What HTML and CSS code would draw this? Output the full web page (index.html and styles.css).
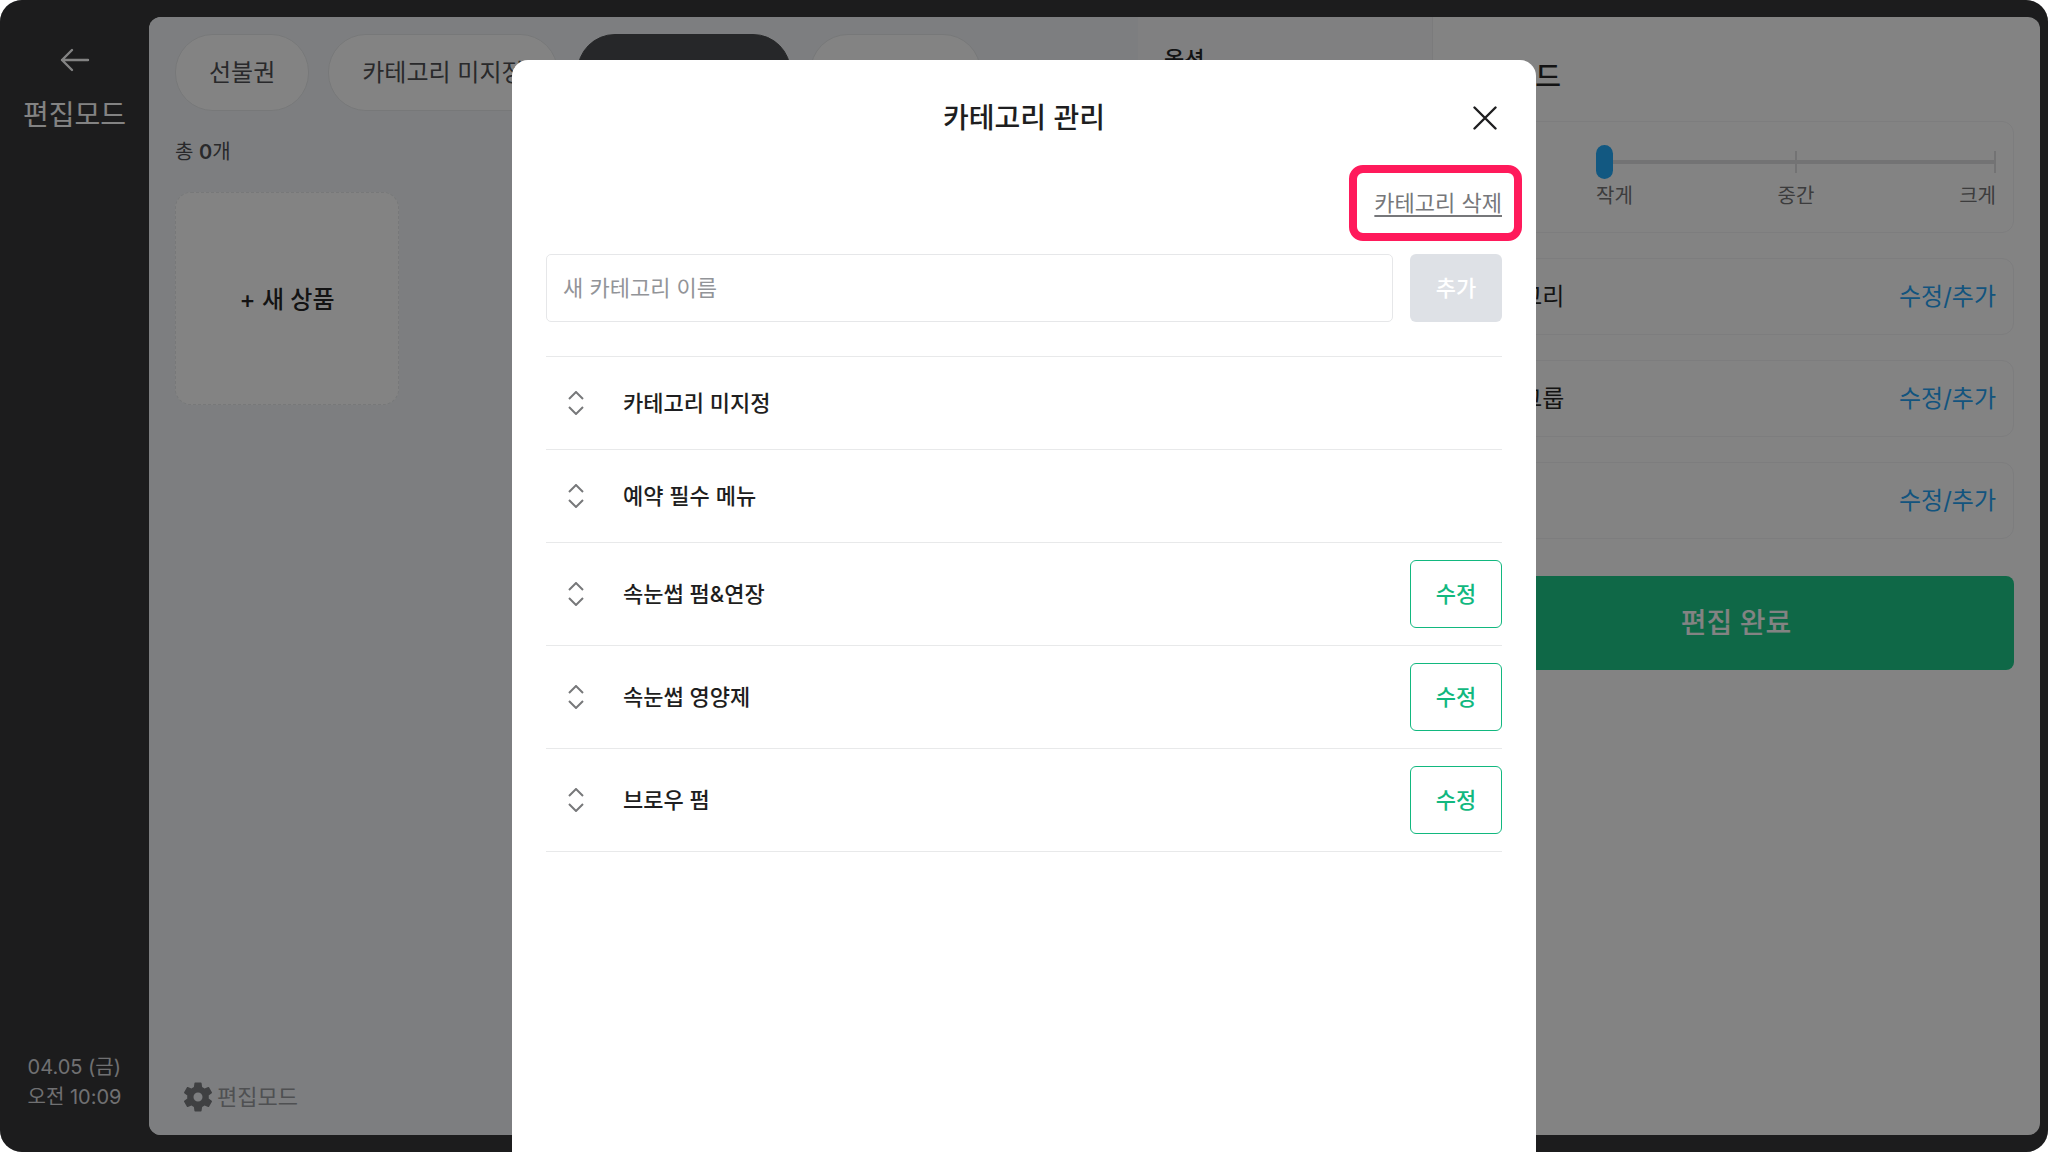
FILE: index.html
```html
<!DOCTYPE html>
<html lang="ko">
<head>
<meta charset="UTF-8">
<meta name="viewport" content="width=device-width, initial-scale=1.0">
<title>카테고리 관리</title>
<link rel="stylesheet" href="styles.css">
</head>
<body>

<div class="app">
    <aside class="sidebar">
        <button class="back" aria-label="뒤로">
            <svg width="30" height="24" viewBox="0 0 30 24" fill="none" stroke="currentColor" stroke-width="2.4" stroke-linecap="round" stroke-linejoin="round">
                <path d="M28 12H2M12 2L2 12L12 22"/>
            </svg>
        </button>
        <h1>편집모드</h1>
        <p class="clock">04.05 (금)<br>오전 10:09</p>
    </aside>

    <main class="panel">
        <section class="products">
            <nav class="tabs">
                <button class="tab">선불권</button>
                <button class="tab">카테고리 미지정</button>
                <button class="tab active">예약 필수 메뉴</button>
                <button class="tab">속눈썹&amp;펌</button>
            </nav>
            <p class="count">총 <b>0</b>개</p>
            <button class="new-product">+ 새 상품</button>
            <button class="edit-mode">
                <svg width="30" height="30" viewBox="2 2 20 20">
                    <path d="M19.14 12.94c.04-.3.06-.61.06-.94 0-.32-.02-.64-.07-.94l2.03-1.58a.49.49 0 0 0 .12-.61l-1.92-3.32a.488.488 0 0 0-.59-.22l-2.39.96c-.5-.38-1.03-.7-1.62-.94l-.36-2.54a.484.484 0 0 0-.48-.41h-3.84c-.24 0-.43.17-.47.41l-.36 2.54c-.59.24-1.13.57-1.62.94l-2.39-.96c-.22-.08-.47 0-.59.22L2.74 8.87c-.12.21-.08.47.12.61l2.03 1.58c-.05.3-.09.63-.09.94s.02.64.07.94l-2.03 1.58a.49.49 0 0 0-.12.61l1.92 3.32c.12.22.37.29.59.22l2.39-.96c.5.38 1.03.7 1.62.94l.36 2.54c.05.24.24.41.48.41h3.84c.24 0 .44-.17.47-.41l.36-2.54c.59-.24 1.13-.56 1.62-.94l2.39.96c.22.08.47 0 .59-.22l1.92-3.32c.12-.22.07-.47-.12-.61l-2.01-1.58zM12 15a3 3 0 1 1 0-6 3 3 0 0 1 0 6z"/>
                </svg>
                편집모드
            </button>
        </section>

        <section class="options">
            <h2>옵션</h2>
        </section>

        <section class="settings">
            <h2>편집모드</h2>
            <div class="setting setting-size">
                <label for="size">크기</label>
                <div class="slider">
                    <input type="range" id="size" min="0" max="2" step="1" value="0">
                    <div class="slider-labels"><span>작게</span><span>중간</span><span>크게</span></div>
                </div>
            </div>
            <div class="setting"><span>카테고리</span><a href="#category">수정/추가</a></div>
            <div class="setting"><span>옵션그룹</span><a href="#option">수정/추가</a></div>
            <div class="setting"><span>할인</span><a href="#discount">수정/추가</a></div>
            <button class="done">편집 완료</button>
        </section>
    </main>

    <div class="overlay">
        <div class="modal" role="dialog" aria-labelledby="modal-title">
            <header class="modal-header">
                <h2 id="modal-title">카테고리 관리</h2>
                <button class="close" aria-label="닫기">
                    <svg width="24" height="24" viewBox="0 0 24 24" fill="none" stroke="currentColor" stroke-width="2.4" stroke-linecap="round">
                        <path d="M1.5 1.5L22.5 22.5M22.5 1.5L1.5 22.5"/>
                    </svg>
                </button>
            </header>

            <div class="delete-row">
                <a class="delete" href="#delete">카테고리 삭제</a>
            </div>

            <form class="add-form">
                <input type="text" placeholder="새 카테고리 이름" aria-label="새 카테고리 이름">
                <button type="button" class="add" disabled>추가</button>
            </form>

            <ul class="categories">
                <li>
                    <svg class="sort" viewBox="0 0 16 24"><path d="M1 8L8 1L15 8M1 16L8 23L15 16"/></svg>
                    <span>카테고리 미지정</span>
                </li>
                <li>
                    <svg class="sort" viewBox="0 0 16 24"><path d="M1 8L8 1L15 8M1 16L8 23L15 16"/></svg>
                    <span>예약 필수 메뉴</span>
                </li>
                <li>
                    <svg class="sort" viewBox="0 0 16 24"><path d="M1 8L8 1L15 8M1 16L8 23L15 16"/></svg>
                    <span>속눈썹 펌&amp;연장</span>
                    <button class="edit">수정</button>
                </li>
                <li>
                    <svg class="sort" viewBox="0 0 16 24"><path d="M1 8L8 1L15 8M1 16L8 23L15 16"/></svg>
                    <span>속눈썹 영양제</span>
                    <button class="edit">수정</button>
                </li>
                <li>
                    <svg class="sort" viewBox="0 0 16 24"><path d="M1 8L8 1L15 8M1 16L8 23L15 16"/></svg>
                    <span>브로우 펌</span>
                    <button class="edit">수정</button>
                </li>
            </ul>
        </div>
    </div>
</div>

</body>
</html>
```
FILE: styles.css
```css
* {
  box-sizing: border-box;
}
body {
  margin: 0;
  background-color: #fff;
  color: #1e1e20;
  font-family: 'Inter', 'Noto Sans CJK KR', sans-serif;
  font-size: 22px;
  line-height: 32px;
}
h1, h2, p, ul {
  margin: 0;
  padding: 0;
}
button, input {
  font: inherit;
  color: inherit;
}
button {
  border: none;
  background: none;
  padding: 0;
  cursor: pointer;
}
svg {
  display: block;
}
.app {
  position: relative;
  display: flex;
  min-height: 100vh;
  padding: 17px 8px 17px 0;
  border-radius: 22px;
  overflow: hidden;
  background-color: #303032;
}

/* sidebar */
.sidebar {
  display: flex;
  flex-direction: column;
  align-items: center;
  width: 149px;
  padding: 31px 0 23px;
  color: #fff;
}
.sidebar h1 {
  margin-top: 27px;
  font-size: 28px;
  line-height: 32px;
  font-weight: 400;
}
.clock {
  margin-top: auto;
  font-size: 20px;
  line-height: 30px;
  color: #d8d8dc;
}

/* main panel */
.panel {
  display: flex;
  flex: 1;
  border-radius: 12px;
  overflow: hidden;
  background-color: #fff;
}
.products {
  display: flex;
  flex: 1;
  flex-direction: column;
  align-items: flex-start;
  min-width: 0;
  padding: 17px 26px 22px;
  background-color: #f2f5f8;
}
.tabs {
  display: flex;
  gap: 19px;
}
.tab {
  height: 77px;
  padding: 1px 33px 0;
  border: 1px solid #e6e8ea;
  border-radius: 38px;
  background-color: #fff;
  font-size: 24px;
  white-space: nowrap;
  color: #4a4b4e;
}
.tab.active {
  border-color: #45474a;
  background-color: #45474a;
  color: #fff;
}
.count {
  margin: 25px 0 24px;
  font-size: 20px;
  color: #4a4b4e;
}
.count b {
  font-weight: 600;
}
.new-product {
  width: 224px;
  height: 213px;
  padding-top: 2px;
  border: 1px dashed #e6e8ea;
  border-radius: 16px;
  background-color: #fff;
  font-size: 24px;
  font-weight: 500;
}
.edit-mode {
  display: flex;
  align-items: center;
  gap: 4px;
  margin: auto 0 0 8px;
  color: #97989c;
}
.edit-mode svg {
  fill: #77797d;
}
.options {
  width: 295px;
  padding: 26px;
  border-right: 1px solid #eeeff0;
  background-color: #f8f8fa;
}
.options h2 {
  font-size: 22px;
  font-weight: 500;
}
.settings {
  display: flex;
  flex-direction: column;
  gap: 25px;
  width: 607px;
  padding: 44px 26px 0 25px;
}
.settings h2 {
  margin-bottom: 3px;
  font-size: 28px;
  line-height: 32px;
  font-weight: 500;
}
.setting {
  display: flex;
  align-items: center;
  justify-content: space-between;
  height: 77px;
  padding: 0 17px;
  border: 1px solid #f2f2f4;
  border-radius: 12px;
  font-size: 24px;
}
.setting a {
  color: #1ca0f4;
  text-decoration: none;
}
.setting-size {
  height: 112px;
}
.slider {
  width: 400px;
  padding-top: 2px;
}
.slider input {
  display: block;
  width: 100%;
  height: 34px;
  margin: 0;
  appearance: none;
  /* track, then the ticks in the middle and at the end */
  background:
    linear-gradient(#dedee0, #dedee0) center / 100% 4px no-repeat,
    linear-gradient(#dedee0, #dedee0) center / 2px 22px no-repeat,
    linear-gradient(#dedee0, #dedee0) right center / 2px 22px no-repeat;
}
.slider input::-webkit-slider-thumb {
  appearance: none;
  width: 17px;
  height: 34px;
  border-radius: 9px;
  background-color: #1ca8fa;
}
.slider-labels {
  display: flex;
  justify-content: space-between;
  padding-top: 1px;
  font-size: 20px;
  color: #707072;
}
.done {
  height: 94px;
  margin-top: 12px;
  border-radius: 8px;
  background-color: #16c886;
  font-size: 28px;
  font-weight: 500;
  color: #fff;
}

/* category modal */
.overlay {
  position: absolute;
  inset: 0;
  display: flex;
  justify-content: center;
  padding-top: 60px;
  background-color: rgba(8, 8, 8, 0.5);
}
.modal {
  width: 50%;
  padding: 0 34px;
  border-radius: 16px 16px 0 0;
  background-color: #fff;
}
.modal-header {
  display: grid;
  grid-template-columns: 34px 1fr 34px;
  align-items: center;
  height: 115px;
}
.modal-header h2 {
  grid-column: 2;
  font-size: 28px;
  line-height: 32px;
  font-weight: 500;
  text-align: center;
}
.close {
  justify-self: center;
}
.delete-row {
  display: flex;
  justify-content: flex-end;
  padding: 12px 0 35px;
}
.delete {
  position: relative;
  color: #76777a;
  text-underline-offset: 4px;
}
.delete::after {
  content: '';
  position: absolute;
  inset: -22px -20px -22px -25px;
  border: 8px solid #ff1a5b;
  border-radius: 14px;
  pointer-events: none;
}
.add-form {
  display: flex;
  gap: 17px;
  margin-bottom: 34px;
}
.add-form input {
  flex: 1;
  min-width: 0;
  height: 68px;
  padding: 0 16px;
  border: 1px solid #e6e7e9;
  border-radius: 5px;
}
.add-form input::placeholder {
  color: #929498;
}
.add, .edit {
  width: 92px;
  height: 68px;
  border-radius: 6px;
  font-weight: 500;
}
.add {
  background-color: #dee1e6;
  color: #fff;
}
.edit {
  margin-left: auto;
  border: 1px solid #12b87f;
  color: #12b87f;
}
.categories {
  list-style: none;
  border-top: 1px solid #e8e9ea;
}
.categories li {
  display: flex;
  align-items: center;
  min-height: 93px;
  padding: 17px 0;
  border-bottom: 1px solid #e8e9ea;
  font-weight: 500;
}
.sort {
  width: 16px;
  height: 24px;
  margin: 0 39px 0 22px;
  fill: none;
  stroke: #77787a;
  stroke-width: 2;
}
```
